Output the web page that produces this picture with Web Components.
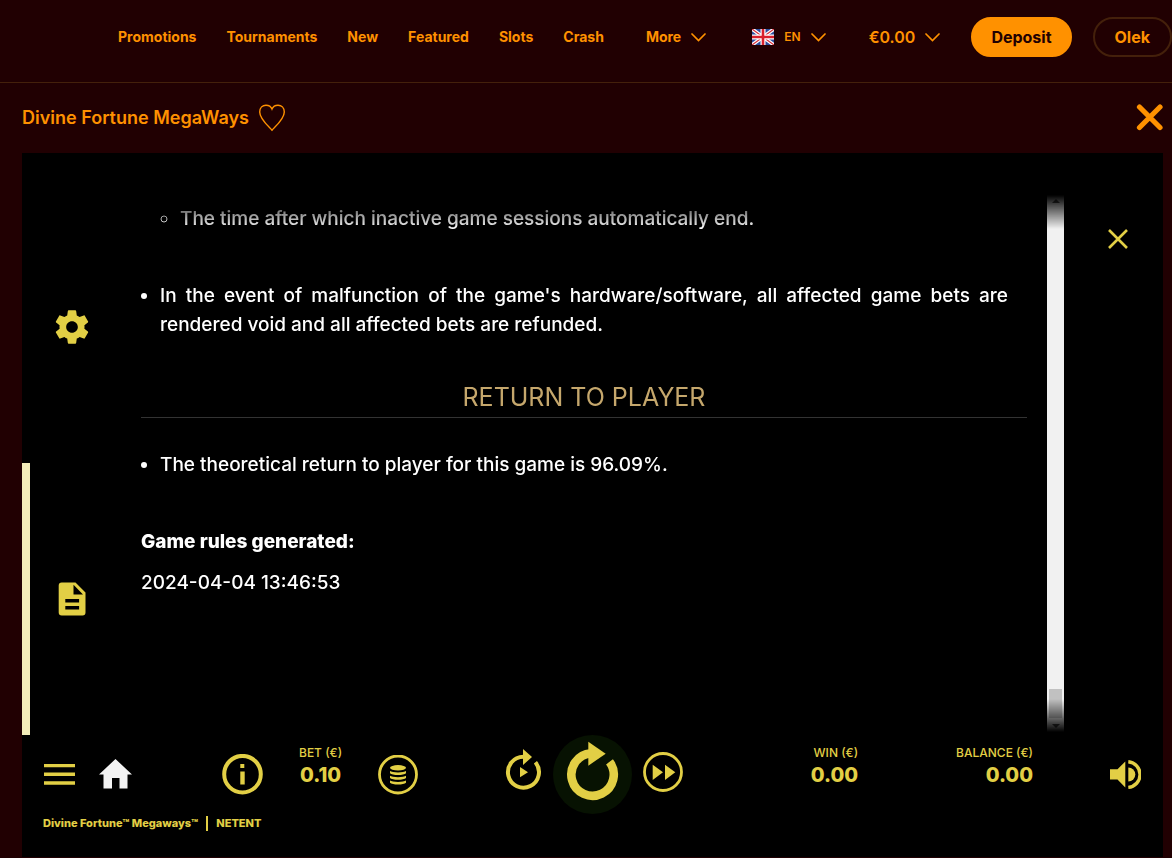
<!DOCTYPE html>
<html lang="en">
<head>
<meta charset="utf-8">
<meta name="viewport" content="width=device-width, initial-scale=1">
<title>Divine Fortune MegaWays</title>
<style>
    :root {
        --clr-page: #210002;
        --clr-line: #44200b;
        --clr-accent: #ff9100;
        --clr-game: #e2cf45;
    }
    body {
        margin: 0;
        min-height: 100vh;
        display: flex;
        flex-direction: column;
        background: var(--clr-page);
        font-family: Inter, "Liberation Sans", sans-serif;
        overflow-x: hidden;
    }
</style>
</head>
<body>
<site-header>
    <nav-link>Promotions</nav-link>
    <nav-link>Tournaments</nav-link>
    <nav-link>New</nav-link>
    <nav-link>Featured</nav-link>
    <nav-link>Slots</nav-link>
    <nav-link>Crash</nav-link>
    <drop-button slot="more">More</drop-button>
    <drop-button slot="tools" size="small" flag>EN</drop-button>
    <drop-button slot="tools" size="large">€0.00</drop-button>
    <pill-button slot="account" filled>Deposit</pill-button>
    <pill-button slot="account">Olek</pill-button>
</site-header>
<game-title>Divine Fortune MegaWays</game-title>
<game-frame>
    <side-tabs slot="tabs"></side-tabs>
    <rules-panel slot="rules">
        <rules-text></rules-text>
    </rules-panel>
    <game-bar slot="bar">
        <game-meter slot="bet" label="BET (€)">0.10</game-meter>
        <game-meter slot="totals" label="WIN (€)" align="end">0.00</game-meter>
        <game-meter slot="totals" label="BALANCE (€)" align="end">0.00</game-meter>
        <span slot="name">Divine Fortune™ Megaways™</span>
        <span slot="maker">NETENT</span>
    </game-bar>
</game-frame>

<script>
// shared reset for every <button> drawn inside a shadow root
const buttonReset = `
    button {
        margin: 0;
        padding: 0;
        border: 0;
        background: none;
        color: inherit;
        font: inherit;
        cursor: pointer;
    }
    svg {
        display: block;
    }
`

const icons = {
    chevron: [15, 9, '<path d="M1 1l6.500 6.500L14 1" fill="none" stroke="currentColor" stroke-width="1.700" stroke-linecap="round"/>'],
    heart: [28, 28, '<path d="M14 26.200C11 22.700 1.700 15.200 1.700 8C1.700 3.700 4.600 1.200 8 1.200C10.800 1.200 13 2.500 14 5C15 2.500 17.200 1.200 20 1.200C23.400 1.200 26.300 3.700 26.300 8C26.300 15.200 17 22.700 14 26.200Z" fill="none" stroke="currentColor" stroke-width="1.400"/>'],
    cross: [27, 28, '<path d="M3.500 3l20.500 20.500M24 3L3.500 23.500" fill="none" stroke="currentColor" stroke-width="5.200" stroke-linecap="round"/>'],
    close: [20, 20, '<path d="M1 1l18 18M19 1L1 19" fill="none" stroke="currentColor" stroke-width="2.600"/>'],
    flag: [22, 16, `
        <path d="M0 0h22v16H0z" fill="#2a4c9c"/>
        <path d="M0 0l22 16M22 0L0 16" stroke="#fff" stroke-width="3.600"/>
        <path d="M0 0l22 16M22 0L0 16" stroke="#d8303c" stroke-width="1.200"/>
        <path d="M11 0v16M0 8h22" stroke="#fff" stroke-width="5"/>
        <path d="M11 0v16M0 8h22" stroke="#d8202c" stroke-width="2.600"/>`],
    gear: [40, 40, '<path transform="scale(1.6667)" d="M19.430 12.980c.04-.32.07-.64.07-.98s-.03-.66-.07-.98l2.110-1.650c.19-.15.24-.42.12-.64l-2-3.460c-.12-.22-.39-.3-.61-.22l-2.490 1c-.52-.4-1.080-.73-1.690-.98l-.38-2.650C14.460 2.180 14.250 2 14 2h-4c-.25 0-.46.18-.49.42l-.38 2.650c-.61.25-1.170.59-1.690.98l-2.490-1c-.23-.09-.49 0-.61.22l-2 3.460c-.13.22-.07.49.12.64l2.110 1.650c-.04.32-.07.65-.07.98s.03.66.07.98l-2.110 1.650c-.19.15-.24.42-.12.64l2 3.460c.12.22.39.3.61.22l2.490-1c.52.4 1.080.73 1.690.98l.38 2.650c.03.24.24.42.49.42h4c.25 0 .46-.18.49-.42l.38-2.650c.61-.25 1.170-.59 1.690-.98l2.490 1c.23.09.49 0 .61-.22l2-3.460c.12-.22.07-.49-.12-.64l-2.110-1.650zM12 15.500c-1.930 0-3.500-1.570-3.500-3.500s1.570-3.500 3.500-3.500 3.500 1.570 3.500 3.500-1.570 3.500-3.500 3.500z" fill="currentColor"/>'],
    doc: [40, 40, '<path fill-rule="evenodd" d="M9.700 3.500H23.500L33.500 13.500V33.500a3 3 0 0 1-3 3H9.700a3 3 0 0 1-3-3V6.500a3 3 0 0 1 3-3zM21.500 5.800V15.500H31zM13.300 20v3.600h13.800V20zM13.300 26.900v3.600h13.800v-3.600z" fill="currentColor"/>'],
    menu: [31, 22, '<path d="M0 1.500h31M0 10.300h31M0 19h31" stroke="currentColor" stroke-width="3.400"/>'],
    home: [33, 32, '<path d="M16.500 0L33 15.500H28.500V29.500H20.500V19H13V29.500H4.500V15.500H0Z" fill="#f3f3f3"/>'],
    info: [41, 41, `
        <circle cx="20.500" cy="20.200" r="18.300" fill="none" stroke="currentColor" stroke-width="4"/>
        <path d="M18.300 10h4v4h-4zM18.300 17.500h4.400v13h-4.400z" fill="currentColor"/>`],
    coins: [40, 40, `
        <circle cx="20" cy="19.500" r="18.500" fill="none" stroke="currentColor" stroke-width="2.800"/>
        <ellipse cx="20" cy="12.800" rx="8" ry="2.700" fill="currentColor"/>
        <path d="M12 16.100c2 1.900 14 1.900 16 0v2.200c-2 2.400-14 2.400-16 0zM12 20.800c2 1.900 14 1.900 16 0v2.200c-2 2.400-14 2.400-16 0zM12 25.500c2 1.900 14 1.900 16 0v2.200c-2 2.400-14 2.400-16 0z" fill="currentColor"/>`],
    autoplay: [37, 54, `
        <path d="M30.400 14.300A15.500 15.500 0 1 1 18.500 8.700" fill="none" stroke="currentColor" stroke-width="4"/>
        <path d="M18 1l9 8-9 8zM15 19l8 5.300-8 5z" fill="currentColor"/>`],
    spin: [79, 79, `
        <circle cx="39.500" cy="39.500" r="39.500" fill="#071202"/>
        <path d="M56.500 26.800A21.200 21.200 0 1 1 38 18.400" fill="none" stroke="currentColor" stroke-width="8.600"/>
        <path d="M35.300 6.700l17.400 12-17.400 12z" fill="currentColor"/>`],
    forward: [40, 46, `
        <circle cx="20" cy="20" r="18.500" fill="none" stroke="currentColor" stroke-width="2.800"/>
        <path d="M9.700 12.700l10.300 7.600-10.300 7.700zM22 12.700l10.300 7.600L22 28z" fill="currentColor"/>`],
    sound: [31, 30, `
        <path d="M0 9.300h7.500L15.300 1.500v26l-7.800-8H0z" fill="currentColor"/>
        <path d="M18.300 7.500a7 7 0 0 1 0 14z" fill="currentColor"/>
        <path d="M18.300 1.700A12.900 12.900 0 0 1 18.300 27.400" fill="none" stroke="currentColor" stroke-width="3.400"/>`],
}

const icon = name => {
    const [w, h, body] = icons[name]
    return `<svg width="${w}" height="${h}" viewBox="0 0 ${w} ${h}" aria-hidden="true">${body}</svg>`
}

class SiteHeader extends HTMLElement {
    constructor() {
        super()
        this.attachShadow({mode: 'open'}).innerHTML = `
        <style>
            :host {
                display: block;
                border-bottom: 1px solid var(--clr-line);
                color: var(--clr-accent);
            }
            header {
                display: flex;
                align-items: center;
                justify-content: space-between;
                height: 40px;
                padding: 17px 0 25px 118px;
            }
            nav, .links, .right, .tools, .account {
                display: flex;
                align-items: center;
            }
            nav { gap: 42px; }
            .links { gap: 30px; }
            .right { gap: 31px; }
            .tools { gap: 43px; }
            .account { gap: 21px; }
        </style>
        <header>
            <nav>
                <div class="links"><slot></slot></div>
                <slot name="more"></slot>
            </nav>
            <div class="right">
                <div class="tools"><slot name="tools"></slot></div>
                <div class="account"><slot name="account"></slot></div>
            </div>
        </header>
        `
    }
}
customElements.define('site-header', SiteHeader)

class NavLink extends HTMLElement {
    constructor() {
        super()
        this.attachShadow({mode: 'open'}).innerHTML = `
        <style>
            :host { display: block; }
            a {
                display: block;
                color: inherit;
                font-size: 14px;
                font-weight: 700;
                line-height: 20px;
                text-decoration: none;
            }
        </style>
        <a href="#"><slot></slot></a>
        `
    }
}
customElements.define('nav-link', NavLink)

class DropButton extends HTMLElement {
    constructor() {
        super()
        this.attachShadow({mode: 'open'}).innerHTML = `
        <style>
            ${buttonReset}
            :host { display: block; }
            button {
                display: flex;
                align-items: center;
                gap: 10px;
                font-size: 14px;
                font-weight: 700;
                line-height: 20px;
                white-space: nowrap;
            }
            :host([size=small]) button {
                font-size: 12px;
                font-weight: 600;
            }
            :host([size=large]) button {
                font-size: 16px;
                font-weight: 600;
            }
        </style>
        <button type="button">${this.hasAttribute('flag') ? icon('flag') : ''}<slot></slot>${icon('chevron')}</button>
        `
    }
}
customElements.define('drop-button', DropButton)

class PillButton extends HTMLElement {
    constructor() {
        super()
        this.attachShadow({mode: 'open'}).innerHTML = `
        <style>
            ${buttonReset}
            :host { display: block; }
            button {
                box-sizing: border-box;
                height: 40px;
                padding: 0 20px;
                border: 2px solid var(--clr-line);
                border-radius: 20px;
                font-size: 16px;
                font-weight: 700;
            }
            :host([filled]) button {
                padding: 0 18px;
                border-color: var(--clr-accent);
                background: var(--clr-accent);
                color: var(--clr-page);
            }
        </style>
        <button type="button"><slot></slot></button>
        `
    }
}
customElements.define('pill-button', PillButton)

class GameTitle extends HTMLElement {
    constructor() {
        super()
        this.attachShadow({mode: 'open'}).innerHTML = `
        <style>
            ${buttonReset}
            :host {
                display: flex;
                align-items: center;
                gap: 9px;
                height: 70px;
                padding: 0 9px 0 22px;
                color: var(--clr-accent);
            }
            h1 {
                margin: 0;
                font-size: 18px;
                font-weight: 600;
                line-height: 24px;
            }
            .close { margin-left: auto; }
        </style>
        <h1><slot></slot></h1>
        <button type="button" aria-label="Add to favourites">${icon('heart')}</button>
        <button type="button" class="close" aria-label="Close game">${icon('cross')}</button>
        `
    }
}
customElements.define('game-title', GameTitle)

class GameFrame extends HTMLElement {
    constructor() {
        super()
        this.attachShadow({mode: 'open'}).innerHTML = `
        <style>
            ${buttonReset}
            :host {
                display: flex;
                flex: 1;
                flex-direction: column;
                margin: 0 9px 1px 22px;
                background: #000;
                color: var(--clr-game);
            }
            .help {
                display: grid;
                grid-template-columns: 100px 1fr 99px;
                padding-top: 38px;
            }
            .close {
                justify-self: end;
                align-self: start;
                margin: 38px 35px 0 0;
            }
        </style>
        <section class="help">
            <slot name="tabs"></slot>
            <slot name="rules"></slot>
            <button type="button" class="close" aria-label="Close rules">${icon('close')}</button>
        </section>
        <slot name="bar"></slot>
        `
    }
}
customElements.define('game-frame', GameFrame)

class SideTabs extends HTMLElement {
    constructor() {
        super()
        this.attachShadow({mode: 'open'}).innerHTML = `
        <style>
            ${buttonReset}
            :host {
                display: grid;
                grid-template-rows: 1fr 1fr;
            }
            button {
                display: grid;
                place-items: center;
            }
            .active { box-shadow: inset 8px 0 #f3ecb9; }
        </style>
        <button type="button" aria-label="Settings">${icon('gear')}</button>
        <button type="button" class="active" aria-label="Game rules">${icon('doc')}</button>
        `
    }
}
customElements.define('side-tabs', SideTabs)

class RulesPanel extends HTMLElement {
    constructor() {
        super()
        this.attachShadow({mode: 'open'}).innerHTML = `
        <style>
            /* both ends of the scrolled area fade to black */
            :host {
                display: flex;
                min-height: 544px;
                -webkit-mask-image: linear-gradient(transparent 4px, #000 38px, #000 calc(100% - 36px), transparent calc(100% - 3px));
                mask-image: linear-gradient(transparent 4px, #000 38px, #000 calc(100% - 36px), transparent calc(100% - 3px));
            }
            .view {
                flex: 1;
                padding: 13px 20px 0 19px;
            }
            .track {
                box-sizing: border-box;
                display: flex;
                flex-direction: column;
                align-items: center;
                width: 17px;
                padding: 8px 0 7px;
                background: #f1f1f1;
            }
            .thumb {
                width: 13px;
                height: 29px;
                margin: auto 0 6px;
                background: #c1c1c1;
            }
            svg { display: block; }
        </style>
        <div class="view"><slot></slot></div>
        <div class="track">
            <svg width="8" height="4" viewBox="0 0 8 4"><path d="M0 4l4-4 4 4z" fill="#505050"/></svg>
            <div class="thumb"></div>
            <svg width="8" height="4" viewBox="0 0 8 4"><path d="M0 0l4 4 4-4z" fill="#505050"/></svg>
        </div>
        `
    }
}
customElements.define('rules-panel', RulesPanel)

class RulesText extends HTMLElement {
    constructor() {
        super()
        this.attachShadow({mode: 'open'}).innerHTML = `
        <style>
            :host {
                display: block;
                color: #fff;
                font-size: 19px;
                font-weight: 500;
                line-height: 29px;
            }
            ul {
                margin: 0;
                padding: 0 19px;
                text-align: justify;
            }
            ul ul {
                padding: 0 0 0 20px;
            }
            li + li { margin-top: 48px; }
            .plain { list-style: none; }
            h2 {
                margin: 39px 0 32px;
                border-bottom: 1px solid #333;
                color: #c5a76c;
                font-size: 25px;
                font-weight: 400;
                line-height: 39px;
                text-align: center;
            }
            h3 {
                margin: 48px 0 12px;
                font-size: inherit;
                font-weight: 800;
            }
            p { margin: 0; }
        </style>
        <ul>
            <li class="plain">
                <ul><li>The time after which inactive game sessions automatically end.</li></ul>
            </li>
            <li>In the event of malfunction of the game's hardware/software, all affected game bets are rendered void and all affected bets are refunded.</li>
        </ul>
        <h2>RETURN TO PLAYER</h2>
        <ul>
            <li>The theoretical return to player for this game is 96.09%.</li>
        </ul>
        <h3>Game rules generated:</h3>
        <p>2024-04-04 13:46:53</p>
        `
    }
}
customElements.define('rules-text', RulesText)

class GameMeter extends HTMLElement {
    constructor() {
        super()
        this.attachShadow({mode: 'open'}).innerHTML = `
        <style>
            :host {
                display: flex;
                flex-direction: column;
                align-items: center;
                padding-bottom: 16px;
                white-space: nowrap;
            }
            :host([align=end]) { align-items: flex-end; }
            .label {
                font-size: 12px;
                font-weight: 500;
                line-height: 16px;
            }
            .value {
                font-size: 20px;
                font-weight: 800;
                line-height: 28px;
            }
        </style>
        <span class="label">${this.getAttribute('label')}</span>
        <span class="value"><slot></slot></span>
        `
    }
}
customElements.define('game-meter', GameMeter)

class GameBar extends HTMLElement {
    constructor() {
        super()
        this.attachShadow({mode: 'open'}).innerHTML = `
        <style>
            ${buttonReset}
            :host {
                display: block;
                padding-bottom: 24px;
            }
            .controls {
                display: grid;
                grid-template-columns: 1fr auto 1fr;
                align-items: center;
                height: 79px;
            }
            .left, .center, .right {
                display: flex;
                align-items: center;
            }
            .left {
                gap: 36px;
                padding-left: 22px;
            }
            .main {
                display: flex;
                align-items: center;
                gap: 24px;
                margin-right: 54px;
            }
            .center {
                gap: 11px;
                padding-left: 2px;
            }
            .right {
                justify-content: flex-end;
                padding-right: 22px;
            }
            .totals {
                display: flex;
                gap: 98px;
                margin-right: 77px;
            }
            footer {
                display: flex;
                align-items: center;
                gap: 8px;
                padding-left: 21px;
                font-size: 11px;
                font-weight: 800;
                line-height: 19px;
            }
            .bar {
                width: 2px;
                height: 15px;
                background: currentColor;
            }
        </style>
        <div class="controls">
            <div class="left">
                <div class="main">
                    <button type="button" aria-label="Menu">${icon('menu')}</button>
                    <button type="button" aria-label="Home">${icon('home')}</button>
                </div>
                <button type="button" aria-label="Info">${icon('info')}</button>
                <slot name="bet"></slot>
                <button type="button" aria-label="Bet settings">${icon('coins')}</button>
            </div>
            <div class="center">
                <button type="button" aria-label="Autoplay">${icon('autoplay')}</button>
                <button type="button" aria-label="Spin">${icon('spin')}</button>
                <button type="button" aria-label="Quick spin">${icon('forward')}</button>
            </div>
            <div class="right">
                <div class="totals"><slot name="totals"></slot></div>
                <button type="button" aria-label="Sound">${icon('sound')}</button>
            </div>
        </div>
        <footer>
            <slot name="name"></slot>
            <span class="bar"></span>
            <slot name="maker"></slot>
        </footer>
        `
    }
}
customElements.define('game-bar', GameBar)
</script>
</body>
</html>
